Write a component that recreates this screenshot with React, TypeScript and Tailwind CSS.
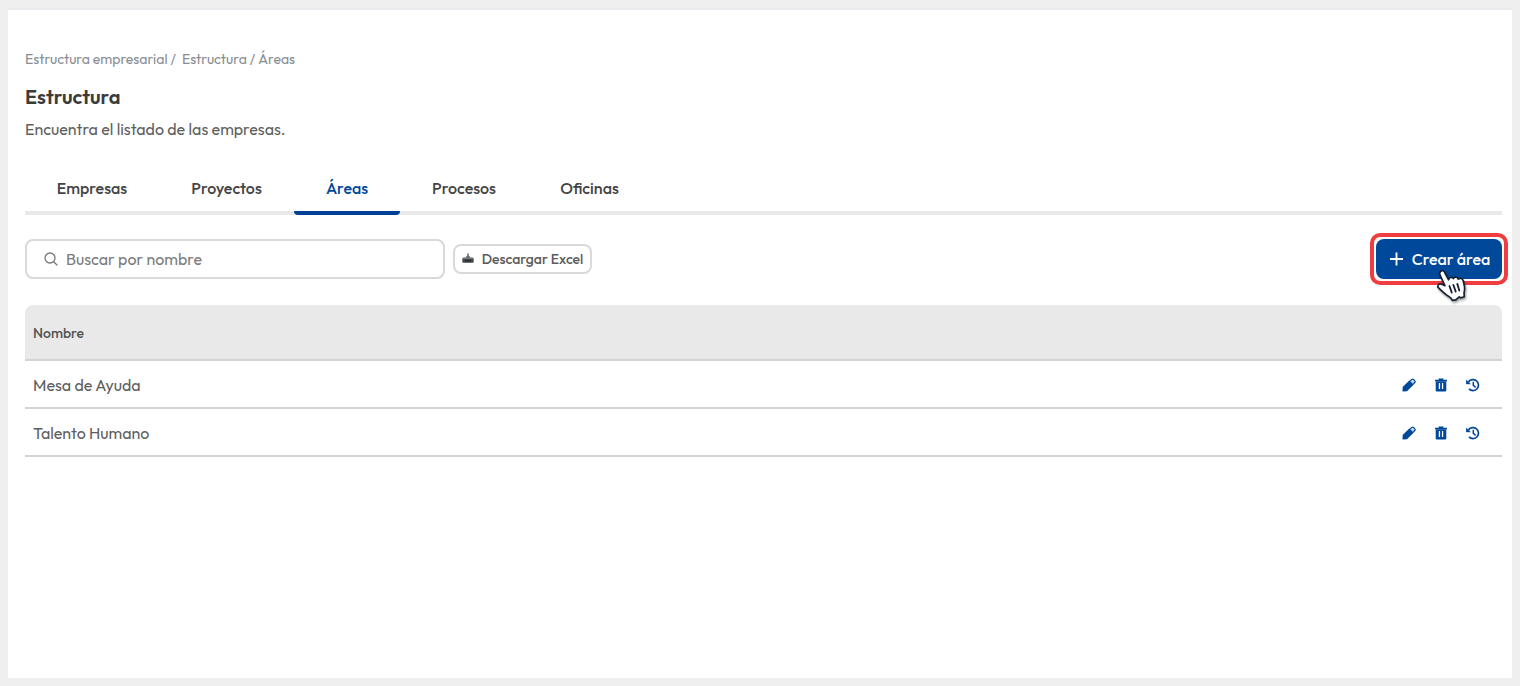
import React from "react";

const tabs = [
  { label: "Empresas", width: "w-[134px]" },
  { label: "Proyectos", width: "w-[135px]" },
  { label: "Áreas", width: "w-[106px]", active: true },
  { label: "Procesos", width: "w-[128px]" },
  { label: "Oficinas", width: "w-[123px]" },
];

const areas = ["Mesa de Ayuda", "Talento Humano"];

function SearchIcon() {
  return (
    <svg width="14" height="14" viewBox="0 0 14 14" fill="none" stroke="#777" strokeWidth="1.3" strokeLinecap="round" aria-hidden="true">
      <circle cx="6" cy="6" r="5" />
      <path d="M9.7 9.7 13 13" />
    </svg>
  );
}

function DownloadTrayIcon() {
  return (
    <svg width="12" height="12" viewBox="0 0 12 12" aria-hidden="true">
      <path d="M1.500 4.500h9l1.200 1.200v3.100a1 1 0 0 1-1 1H1.300a1 1 0 0 1-1-1V5.700Z" fill="#44484c" />
      <path d="M2 4.200h8l1 1.300H1Z" fill="#a2a6aa" />
      <path d="M5.200.4h1.600v2.800h1.700L6 5.900 3.500 3.200h1.700Z" fill="#666b70" />
      <path d="M3 7.800h6" stroke="#202326" strokeWidth="1" />
    </svg>
  );
}

function PencilIcon() {
  return (
    <svg width="14" height="14" viewBox="0 0 14 14" fill="#004899" aria-hidden="true">
      <path d="M.5 13.500.7 9.100 7.500 2.300l4.300 4.300L5 13.300Z" />
      <path d="M8.300 2.800 9.700 1.400a1.200 1.200 0 0 1 1.700 0l1.400 1.400a1.200 1.200 0 0 1 0 1.700l-1.500 1.500" fill="#c5d6e8" stroke="#004899" strokeWidth="1.2" />
    </svg>
  );
}

function TrashIcon() {
  return (
    <svg width="14" height="14" viewBox="0 0 14 14" fill="#004899" aria-hidden="true">
      <path d="M4.600.4h4.800v1.300h3.600v1.600H1V1.700h3.600Z" />
      <path fillRule="evenodd" d="M1.700 3.300h10.600v9.300a1 1 0 0 1-1 1H2.700a1 1 0 0 1-1-1ZM4.800 5v6h1.300V5Zm3.100 0v6h1.300V5Z" />
    </svg>
  );
}

function HistoryIcon() {
  return (
    <svg width="14" height="14" viewBox="0 0 14 14" fill="none" stroke="#004899" aria-hidden="true">
      <path d="M2.300 4.200A5.500 5.500 0 1 1 3 10.900" strokeWidth="1.700" />
      <path d="M.2 1.900v4h4.200Z" fill="#004899" stroke="#004899" strokeWidth=".5" />
      <path d="M7.300 3.700v3.600l2.400 2" strokeWidth="1.500" />
    </svg>
  );
}

function HandPointer() {
  return (
    <svg
      className="pointer-events-none absolute left-[61px] top-[31px] drop-shadow-[1px_2px_1px_rgba(0,0,0,0.35)]"
      width="34"
      height="36"
      viewBox="0 0 32 34"
      strokeLinejoin="round"
      strokeLinecap="round"
      aria-hidden="true"
    >
      <path
        d="M5.200 3.200C6.500 2 8.300 2.500 9 4l3.800 7.200c.4-2.300 3-3.100 4.500-1.200.9-1.800 3.600-1.900 4.700.4 1.500-1.300 3.900-.5 4.600 1.600l1.200 5.500c.5 2.500-.1 4-.4 6l.2 3.700-3.500 1-1.300-1-3.200 2.900-3.300.4-1.500-2.300c-2.300-1.400-5.100-3.200-7.500-5.600l-4-3.900c-1.800-1.800.2-4.300 2.500-3.500l3.500 1.500L4.700 6.600c-.6-1.300-.4-2.600.5-3.400Z"
        fill="#fff"
        stroke="#172033"
        strokeWidth="1.600"
      />
      <path d="m13.600 17 2.200 6.300M17.300 16l2.200 6.300M21 15l1.900 6.300" fill="none" stroke="#172033" strokeWidth="1.700" />
    </svg>
  );
}

export default function App() {
  return (
    <div className="flex min-h-screen bg-[#efefef] p-2 font-['Outfit','Lato',sans-serif] text-[#555]">
      <main className="min-w-0 flex-1 border-t-2 border-[#ebe9ee] bg-white pr-[10px] pl-[17px] pt-[39px]">
        <nav aria-label="Ruta" className="flex h-5 items-center gap-[6px] text-sm leading-5 text-[#888e94]">
          <a href="#empresarial">Estructura empresarial /</a>
          <span className="flex gap-[3px]">
            <a href="#estructura">Estructura</a>
            <span>/</span>
            <span aria-current="page">Áreas</span>
          </span>
        </nav>
        <h1 className="mt-3 text-xl leading-8 font-semibold text-[#3b3b3b]">Estructura</h1>
        <p className="mt-1 text-base leading-6 text-[#606060]">Encuentra el listado de las empresas.</p>

        <div role="tablist" className="mt-6 flex border-b-4 border-[#e9e9e9]">
          {tabs.map((tab) => (
            <button
              key={tab.label}
              type="button"
              role="tab"
              aria-selected={!!tab.active}
              className={`${tab.width} relative h-[46px] pb-[1px] text-base font-medium ${tab.active ? "text-[#004899]" : "text-[#444]"}`}
            >
              {tab.label}
              {tab.active && <span className="absolute inset-x-0 -bottom-1 h-1 rounded-b bg-[#003f96]" />}
            </button>
          ))}
        </div>

        <div className="mt-6 flex items-center gap-2">
          <label className="flex h-10 w-[420px] items-center gap-2 rounded-lg border-2 border-[#d9d9d9] pl-[17px]">
            <SearchIcon />
            <input
              type="search"
              aria-label="Buscar por nombre"
              placeholder="Buscar por nombre"
              className="min-w-0 flex-1 bg-transparent text-base outline-none placeholder:text-[#7c7c7c]"
            />
          </label>
          <button type="button" className="flex h-[30px] w-[139px] items-center justify-center gap-2 rounded-lg border-2 border-[#d9d9d9] text-sm font-medium whitespace-nowrap text-[#5c5c5c]">
            <DownloadTrayIcon />
            Descargar Excel
          </button>
          <div className="relative -my-2 -mr-[6px] ml-auto rounded-[10px] border-4 border-[#f03e40] p-[2px]">
            <button type="button" className="flex h-10 w-[126px] items-center justify-center gap-2 rounded-lg bg-[#004899] pl-[2px] text-base font-medium whitespace-nowrap text-white">
              <svg width="14" height="14" viewBox="0 0 14 14" stroke="currentColor" strokeWidth="1.800" aria-hidden="true">
                <path d="M6.500.5v13M0 7h13" />
              </svg>
              Crear área
            </button>
            <HandPointer />
          </div>
        </div>

        <table className="mt-[26px] w-full border-separate border-spacing-0 text-left">
          <thead>
            <tr>
              <th scope="col" className="h-14 rounded-tl-lg border-b-2 border-[#d3d3d3] bg-[#e9e9e9] px-2 pt-[2px] text-sm font-medium">Nombre</th>
              <th scope="col" aria-label="Acciones" className="rounded-tr-lg border-b-2 border-[#d3d3d3] bg-[#e9e9e9]" />
            </tr>
          </thead>
          <tbody>
            {areas.map((area) => (
              <tr key={area}>
                <td className="h-12 border-b-2 border-[#d3d3d3] px-2 pt-[2px] text-base text-[#606060]">{area}</td>
                <td className="border-b-2 border-[#d3d3d3] pt-[2px] pr-[22px]">
                  <div className="flex justify-end gap-[18px]">
                    <button type="button" aria-label={`Editar ${area}`}><PencilIcon /></button>
                    <button type="button" aria-label={`Eliminar ${area}`}><TrashIcon /></button>
                    <button type="button" aria-label={`Historial de ${area}`}><HistoryIcon /></button>
                  </div>
                </td>
              </tr>
            ))}
          </tbody>
        </table>
      </main>
    </div>
  );
}
